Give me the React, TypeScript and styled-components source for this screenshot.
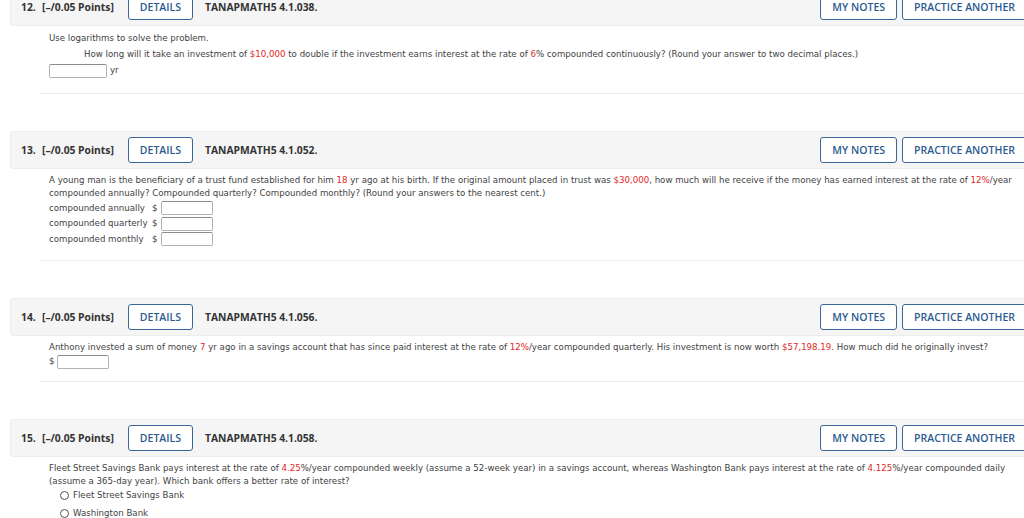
import React from 'react';
import styled, { createGlobalStyle } from 'styled-components';

const Global = createGlobalStyle`
  html, body { margin: 0; padding: 0; background: #fff; overflow: hidden; }
  body { width: 1024px; height: 518px; }
`;

const Page = styled.div`
  margin-top: -12px;
  padding-left: 10px;
  width: 1040px;
  display: flex;
  flex-direction: column;
`;

const Question = styled.section`
  display: flex;
  flex-direction: column;
`;

const Header = styled.div`
  display: flex;
  align-items: center;
  height: 38px;
  box-sizing: border-box;
  background: #f5f5f5;
  border: 1px solid #ececec;
  border-radius: 3px;
  padding: 0 22px 0 10px;
  font-family: "Open Sans", sans-serif;
  font-weight: 700;
  font-size: 10.3px;
  color: #333;
`;

const Num = styled.span`
  width: 21px;
`;

const Points = styled.span`
  margin-right: 14px;
`;

const Btn = styled.button`
  height: 26px;
  box-sizing: border-box;
  padding: 0 11px;
  border: 1px solid #3a6798;
  border-radius: 3px;
  background: #fff;
  color: #2b5b90;
  font-family: "Open Sans", sans-serif;
  font-weight: 600;
  font-size: 10.5px;
  cursor: pointer;
`;

const Code = styled.span`
  margin-left: 12px;
  flex: 1;
`;

const Actions = styled.div`
  display: flex;
  gap: 5px;
`;

const Body = styled.div<{ $top?: number }>`
  padding: ${(p) => p.$top ?? 5}px 21px 0 39px;
  font-family: "DejaVu Sans", Verdana, sans-serif;
  font-size: 8.65px;
  line-height: 13px;
  color: #424242;
`;

const Line = styled.div<{ $indent?: number; $mt?: number }>`
  margin-left: ${(p) => p.$indent ?? 0}px;
  margin-top: ${(p) => p.$mt ?? 0}px;
`;

const Red = styled.span`
  color: #e3261f;
`;

const Field = styled.span<{ $w: number }>`
  display: inline-block;
  box-sizing: border-box;
  width: ${(p) => p.$w}px;
  height: 14px;
  border: 1px solid #b3b3b3;
  border-top-color: #8c8c8c;
  border-radius: 2px;
  background: #fff;
  vertical-align: middle;
`;

const AnswerRow = styled.div<{ $mt?: number; $gap?: number }>`
  display: flex;
  align-items: center;
  gap: ${(p) => p.$gap ?? 3}px;
  height: 15px;
  margin-top: ${(p) => p.$mt ?? 0}px;
`;

const Grid = styled.div`
  display: grid;
  grid-template-columns: 103px 9px 52px;
  row-gap: 1.5px;
  align-items: center;
  margin-top: 1px;
`;

const Radios = styled.div`
  display: flex;
  flex-direction: column;
  padding-left: 11px;
  margin-top: -2px;
`;

const RadioRow = styled.label`
  display: flex;
  align-items: center;
  gap: 4px;
  height: 18px;
`;

const Circle = styled.span`
  display: inline-block;
  box-sizing: border-box;
  width: 9px;
  height: 9px;
  border: 1px solid #555;
  border-radius: 50%;
  background: #fff;
`;

const Divider = styled.hr<{ $mt: number }>`
  border: none;
  border-top: 1px solid #ebebeb;
  margin: ${(p) => p.$mt}px 0 37px 30px;
`;

function QHeader({ n, code }: { n: string; code: string }) {
  return (
    <Header>
      <Num>{n}.</Num>
      <Points>[–/0.05 Points]</Points>
      <Btn>DETAILS</Btn>
      <Code>{code}</Code>
      <Actions>
        <Btn>MY NOTES</Btn>
        <Btn>PRACTICE ANOTHER</Btn>
      </Actions>
    </Header>
  );
}

export default function App() {
  return (
    <>
      <Global />
      <Page>
        <Question>
          <QHeader n="12" code="TANAPMATH5 4.1.038." />
          <Body $top={6}>
            <Line>Use logarithms to solve the problem.</Line>
            <Line $indent={35} $mt={3}>
              How long will it take an investment of <Red>$10,000</Red> to double if the investment earns interest at the
              rate of <Red>6</Red>% compounded continuously? (Round your answer to two decimal places.)
            </Line>
            <AnswerRow $mt={2}>
              <Field $w={58} />
              <span>yr</span>
            </AnswerRow>
          </Body>
          <Divider $mt={15} />
        </Question>

        <Question>
          <QHeader n="13" code="TANAPMATH5 4.1.052." />
          <Body>
            <Line>
              A young man is the beneficiary of a trust fund established for him <Red>18</Red> yr ago at his birth. If the
              original amount placed in trust was <Red>$30,000</Red>, how much will he receive if the money has earned
              interest at the rate of <Red>12%</Red>/year compounded annually? Compounded quarterly? Compounded monthly?
              (Round your answers to the nearest cent.)
            </Line>
            <Grid>
              <span>compounded annually</span>
              <span>$</span>
              <Field $w={52} />
              <span>compounded quarterly</span>
              <span>$</span>
              <Field $w={52} />
              <span>compounded monthly</span>
              <span>$</span>
              <Field $w={52} />
            </Grid>
          </Body>
          <Divider $mt={14} />
        </Question>

        <Question>
          <QHeader n="14" code="TANAPMATH5 4.1.056." />
          <Body>
            <Line>
              Anthony invested a sum of money <Red>7</Red> yr ago in a savings account that has since paid interest at the
              rate of <Red>12%</Red>/year compounded quarterly. His investment is now worth <Red>$57,198.19</Red>. How much
              did he originally invest?
            </Line>
            <AnswerRow $gap={2}>
              <span>$</span>
              <Field $w={52} />
            </AnswerRow>
          </Body>
          <Divider $mt={12} />
        </Question>

        <Question>
          <QHeader n="15" code="TANAPMATH5 4.1.058." />
          <Body>
            <Line>
              Fleet Street Savings Bank pays interest at the rate of <Red>4.25</Red>%/year compounded weekly (assume a
              52-week year) in a savings account, whereas Washington Bank pays interest at the rate of <Red>4.125</Red>
              %/year compounded daily (assume a 365-day year). Which bank offers a better rate of interest?
            </Line>
            <Radios>
              <RadioRow>
                <Circle />
                <span>Fleet Street Savings Bank</span>
              </RadioRow>
              <RadioRow>
                <Circle />
                <span>Washington Bank</span>
              </RadioRow>
            </Radios>
          </Body>
        </Question>
      </Page>
    </>
  );
}
